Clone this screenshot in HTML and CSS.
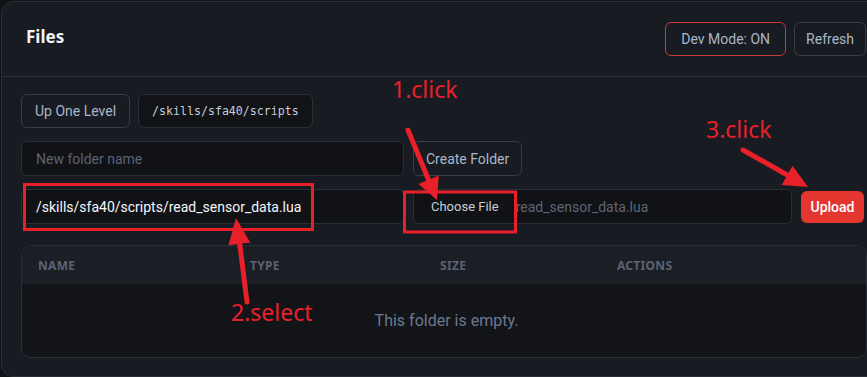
FILE: index.html
```html
<!DOCTYPE html>
<html lang="en">
<head>
<meta charset="utf-8">
<title>Files</title>
<link rel="stylesheet" href="styles.css">
</head>
<body>
<div class="panel">
  <div class="panel-header">
    <h1 class="title">Files</h1>
    <div class="header-actions">
      <button class="btn btn-dev">Dev Mode: ON</button>
      <button class="btn btn-refresh">Refresh</button>
    </div>
  </div>
  <div class="panel-body">
    <div class="row">
      <button class="btn">Up One Level</button>
      <div class="path-box">/skills/sfa40/scripts</div>
    </div>
    <div class="row">
      <div class="input input-main placeholder">New folder name</div>
      <button class="btn btn-create">Create Folder</button>
    </div>
    <div class="row">
      <div class="input input-main value">/skills/sfa40/scripts/read_sensor_data.lua</div>
      <div class="input file-input"><span class="choose">Choose File</span><span class="file-name">read_sensor_data.lua</span></div>
      <button class="btn-upload">Upload</button>
    </div>
    <div class="table">
      <div class="thead">
        <span>Name</span><span>Type</span><span>Size</span><span>Actions</span>
      </div>
      <div class="tbody">This folder is empty.</div>
    </div>
  </div>
</div>

<div class="annotations">
  <svg class="marks" width="867" height="377" viewBox="0 0 867 377">
    <rect x="24.5" y="184.5" width="288" height="45" fill="none" stroke="#e8202a" stroke-width="3"/>
    <rect x="404.5" y="192" width="111" height="40" fill="none" stroke="#e8202a" stroke-width="3"/>
    <line x1="408" y1="130" x2="429" y2="181" stroke="#e8202a" stroke-width="5" stroke-linecap="round"/>
    <polygon points="437,200 418.4,183.9 438.8,175.5" fill="#e8202a"/>
    <line x1="247" y1="302" x2="239.5" y2="242" stroke="#e8202a" stroke-width="5" stroke-linecap="round"/>
    <polygon points="236,218 250.2,242.4 228.4,245.2" fill="#e8202a"/>
    <line x1="743" y1="150" x2="789" y2="176" stroke="#e8202a" stroke-width="5" stroke-linecap="round"/>
    <polygon points="808,187 781.7,184.9 792.5,165.7" fill="#e8202a"/>
  </svg>
  <span class="note note-1">1.click</span>
  <span class="note note-2">2.select</span>
  <span class="note note-3">3.click</span>
</div>
</body>
</html>
```
FILE: styles.css
```css
* { box-sizing: border-box; }

html, body {
  margin: 0;
  padding: 0;
}

body {
  width: 867px;
  height: 377px;
  overflow: hidden;
  background: #101216;
  font-family: Roboto, "Noto Sans", sans-serif;
  position: relative;
}

.panel {
  margin: 1px 0 0 1px;
  width: 885px;
  height: 376px;
  background: #181b21;
  border: 1px solid #2b2e35;
  border-radius: 12px;
}

.panel-header {
  height: 75px;
  border-bottom: 1px solid #2b2e35;
  display: flex;
  align-items: center;
  justify-content: space-between;
  padding: 0 19px 0 24px;
}

.title {
  margin: 0 0 6px 0;
  font-family: "Noto Sans", sans-serif;
  font-size: 17px;
  font-weight: 700;
  color: #f2f4f8;
}

.header-actions {
  display: flex;
  gap: 8px;
}

.btn {
  height: 34px;
  padding: 0 13px;
  background: #181b21;
  border: 1px solid #3a3d45;
  border-radius: 6px;
  color: #a9b6c8;
  font-family: inherit;
  font-size: 14px;
  line-height: 1;
  white-space: nowrap;
}

.btn-dev {
  border: 1.5px solid #c83a3a;
  padding: 0 15px;
}

.btn-refresh {
  padding: 0 11px;
}

.panel-body {
  padding: 17px 19px 0 19px;
  display: flex;
  flex-direction: column;
  gap: 13px;
}

.row {
  display: flex;
  gap: 8px;
  align-items: center;
}

.path-box {
  height: 34px;
  display: flex;
  align-items: center;
  padding: 0 13px;
  background: #121317;
  border: 1px solid #2b2e35;
  border-radius: 6px;
  color: #c5cdd9;
  font-family: "DejaVu Sans Mono", "Liberation Mono", monospace;
  font-size: 11.6px;
}

.input {
  height: 35px;
  display: flex;
  align-items: center;
  background: #111216;
  border: 1px solid #2b2e35;
  border-radius: 6px;
  font-size: 14px;
  white-space: nowrap;
  overflow: hidden;
}

.input-main {
  flex: 0 0 383px;
  padding: 0 14px;
}

.row .btn-create {
  height: 35px;
  padding: 0 12px;
  margin-left: 1px;
}

.placeholder { color: #5b6473; }
.value { color: #f5f7fa; }

.file-input {
  flex: 0 0 379px;
  margin-left: 1px;
  padding: 0 0 0 17px;
}

.choose {
  color: #c5cdd9;
  font-size: 13px;
  margin-right: 17px;
}

.file-name {
  color: #5d6574;
  font-size: 14px;
}

.btn-upload {
  flex: 0 0 63px;
  height: 32px;
  margin-left: 1px;
  border: none;
  border-radius: 6px;
  background: #e5352f;
  color: #ffffff;
  font-family: inherit;
  font-size: 14px;
  font-weight: 500;
}

.table {
  margin-top: 8px;
  width: 846px;
  border: 1px solid #2b2e35;
  border-radius: 10px;
  overflow: hidden;
}

.thead {
  height: 38px;
  display: grid;
  grid-template-columns: 212px 190px 177px 1fr;
  align-items: center;
  padding-left: 16px;
  background: #1b1e25;
  color: #5b6372;
  font-family: "Noto Sans", sans-serif;
  font-size: 12px;
  font-weight: 700;
  letter-spacing: 0.3px;
  text-transform: uppercase;
}

.tbody {
  height: 73px;
  display: flex;
  align-items: center;
  justify-content: center;
  padding-left: 5px;
  background: #131418;
  color: #6b798e;
  font-size: 16px;
}

.annotations {
  position: absolute;
  left: 0;
  top: 0;
  width: 867px;
  height: 377px;
  pointer-events: none;
}

.marks {
  position: absolute;
  left: 0;
  top: 0;
}

.note {
  position: absolute;
  color: #e8202a;
  font-family: "Noto Sans", sans-serif;
  font-size: 23px;
  line-height: 1;
  white-space: nowrap;
}

.note-1 { left: 392px; top: 78px; }
.note-2 { left: 231px; top: 301px; }
.note-3 { left: 706px; top: 118px; }
```
